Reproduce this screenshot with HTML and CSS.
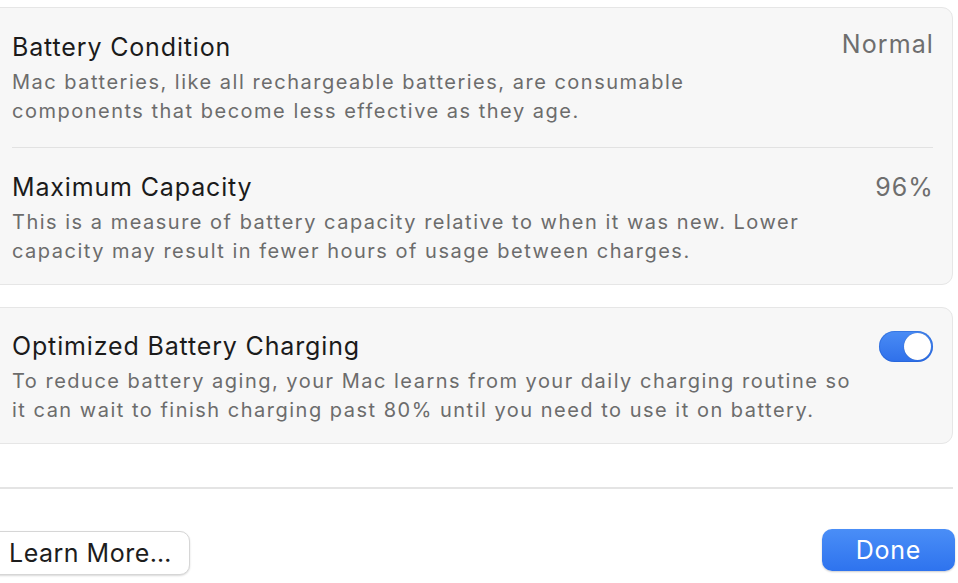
FILE: index.html
```html
<!DOCTYPE html>
<html>
<head>
<meta charset="utf-8">
<link rel="stylesheet" href="styles.css">
</head>
<body>
<div class="sheet">
  <section class="card">
    <div class="row">
      <div class="text">
        <div class="title">Battery Condition</div>
        <div class="desc">Mac batteries, like all rechargeable batteries, are consumable<br>components that become less effective as they age.</div>
      </div>
      <div class="value value-top">Normal</div>
    </div>
    <div class="sep"></div>
    <div class="row">
      <div class="text">
        <div class="title">Maximum Capacity</div>
        <div class="desc">This is a measure of battery capacity relative to when it was new. Lower<br>capacity may result in fewer hours of usage between charges.</div>
      </div>
      <div class="value">96%</div>
    </div>
  </section>
  <section class="card card2">
    <div class="row">
      <div class="text">
        <div class="title">Optimized Battery Charging</div>
        <div class="desc">To reduce battery aging, your Mac learns from your daily charging routine so<br>it can wait to finish charging past 80% until you need to use it on battery.</div>
      </div>
      <div class="toggle"><div class="knob"></div></div>
    </div>
  </section>
  <div class="divider"></div>
  <div class="footer">
    <button class="btn">Learn More…</button>
    <button class="btn primary">Done</button>
  </div>
</div>
</body>
</html>
```

FILE: styles.css
```css
* { box-sizing: border-box; }
html, body { margin: 0; padding: 0; background: #ffffff; }
body {
  font-family: Inter, "Noto Sans", "Liberation Sans", sans-serif;
  color: #1f1f1f;
  width: 958px;
  height: 583px;
  overflow: hidden;
}
.sheet {
  margin-left: -12px;
  padding-top: 7px;
  width: 965px;
}
.card {
  background: #f7f7f7;
  border: 1px solid #e6e6e6;
  border-radius: 11px;
  padding: 0 19px 0 23px;
}
.card2 { margin-top: 22px; }
.row {
  display: flex;
  justify-content: space-between;
  align-items: flex-start;
}
.card .row:first-child { padding-top: 22px; padding-bottom: 21px; }
.card .row:last-child { padding-top: 22px; padding-bottom: 18px; }
.card2 .row:first-child { padding-top: 21px; padding-bottom: 18px; }
.title {
  font-size: 25px;
  line-height: 34px;
  color: #1b1b1b;
  letter-spacing: 0.85px;
}
.desc {
  margin-top: 4px;
  font-size: 20px;
  line-height: 29px;
  color: #6c6c6c;
  letter-spacing: 1.5px;
}
.value {
  font-size: 25px;
  line-height: 34px;
  color: #6e6e6e;
  letter-spacing: 1.1px;
  margin-right: -1px;
}
.value-top { margin-top: -3px; }
.sep {
  height: 1px;
  background: #e2e2e2;
}
.toggle {
  width: 54px;
  height: 31px;
  border-radius: 16px;
  background: linear-gradient(#4a8cf5, #2f70ea);
  margin-top: 2px;
  position: relative;
  box-shadow: inset 0 0 0 1px rgba(30, 90, 200, 0.4);
}
.knob {
  position: absolute;
  right: 2px;
  top: 2px;
  width: 27px;
  height: 27px;
  border-radius: 50%;
  background: #ffffff;
  box-shadow: 0 0 1px rgba(0,0,0,0.3);
}
.divider {
  height: 2px;
  background: #e4e4e4;
  margin-top: 43px;
}
.footer {
  display: flex;
  justify-content: space-between;
  align-items: flex-start;
  margin-top: 40px;
  margin-right: -2px;
}
.btn {
  font-family: Inter, "Noto Sans", "Liberation Sans", sans-serif;
  font-size: 25px;
  letter-spacing: 0.5px;
  border-radius: 10px;
  border: 1px solid #d6d6d6;
  background: #ffffff;
  color: #1d1d1d;
  height: 44px;
  padding: 0 17px 0 20px;
  box-shadow: 0 1px 2px rgba(0,0,0,0.15);
  margin-top: 2px;
}
.btn.primary {
  margin-top: 0;
  width: 133px;
  height: 42px;
  padding: 0;
  border: none;
  color: #ffffff;
  letter-spacing: 0.75px;
  background: linear-gradient(#4a8ef7, #2e73ee);
  box-shadow: 0 1px 2px rgba(0,0,0,0.2);
}
```
